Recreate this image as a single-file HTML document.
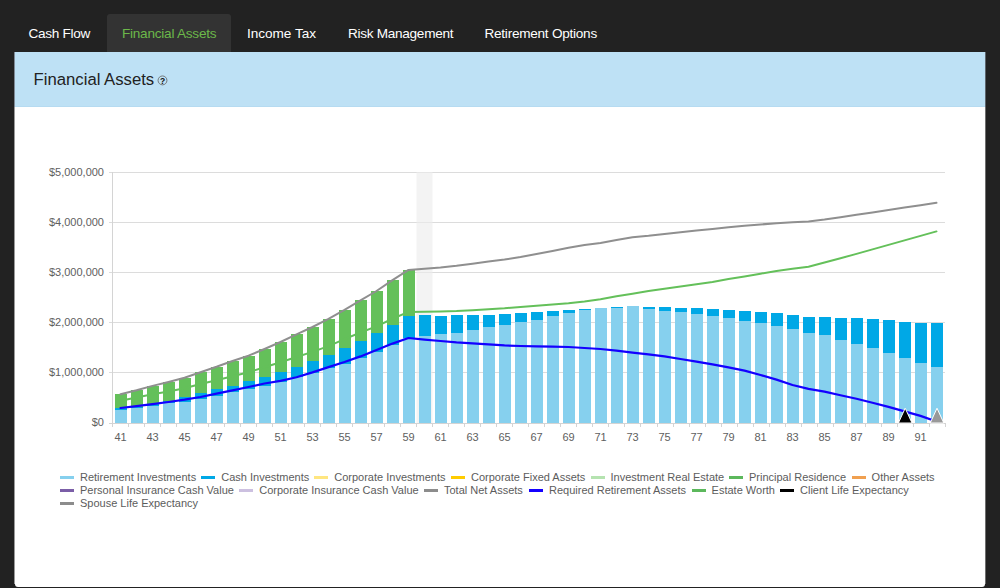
<!DOCTYPE html>
<html><head><meta charset="utf-8">
<style>
html,body{margin:0;padding:0;}
body{width:1000px;height:588px;background:#222222;position:relative;overflow:hidden;font-family:"Liberation Sans",sans-serif;}
.tab{position:absolute;top:14px;height:38px;line-height:40px;font-size:13.6px;color:#ffffff;white-space:nowrap;}
.tab.active{background:#333333;color:#6cb84a;border-radius:3px 3px 0 0;}
#panel{position:absolute;left:15px;top:52px;width:970px;height:535px;background:#fff;border-radius:0 0 3px 3px;overflow:hidden;}
#hdr{position:absolute;left:0;top:0;width:100%;height:54px;background:#bee1f5;border-bottom:1px solid #b6dbf1;}
#title{position:absolute;left:18.6px;top:17.5px;font-size:16.7px;color:#222;white-space:nowrap;}
#chart{position:absolute;left:0;top:0;}
#chart text{font-family:"Liberation Sans",sans-serif;font-size:11px;fill:#606060;}
.leg{position:absolute;font-size:11px;color:#5c5c5c;white-space:nowrap;line-height:13px;}
.leg span.it{display:inline-block;margin-right:5.5px;}
.leg i{display:inline-block;width:14px;height:3px;vertical-align:middle;margin-right:6px;position:relative;top:-1px;}
</style></head><body>
<div class="tab" style="left:28.5px;letter-spacing:-0.31px;">Cash Flow</div>
<div class="tab active" style="left:107px;width:124px;text-align:center;letter-spacing:-0.24px;text-indent:0.24px;">Financial Assets</div>
<div class="tab" style="left:247px;letter-spacing:-0.03px;">Income Tax</div>
<div class="tab" style="left:348px;letter-spacing:-0.29px;">Risk Management</div>
<div class="tab" style="left:484.5px;letter-spacing:-0.26px;">Retirement Options</div>
<div id="panel">
 <div id="hdr"><div id="title">Financial Assets</div></div>
</div>
<svg id="chart" width="1000" height="588" viewBox="0 0 1000 588">
<rect x="14" y="52" width="1" height="55" fill="#7f8a96"/>
<rect x="14" y="107" width="1" height="477" fill="#9a9a9a"/>
<rect x="985" y="52" width="1" height="55" fill="#5d656d"/>
<rect x="985" y="107" width="1" height="477" fill="#6e6e6e"/>
<path d="M109,172.5 H945" stroke="#dcdcdc" stroke-width="1"/>
<path d="M109,222.5 H945" stroke="#dcdcdc" stroke-width="1"/>
<path d="M109,272.5 H945" stroke="#dcdcdc" stroke-width="1"/>
<path d="M109,322.5 H945" stroke="#dcdcdc" stroke-width="1"/>
<path d="M109,372.5 H945" stroke="#dcdcdc" stroke-width="1"/>
<path d="M112.5,172 V427" stroke="#d4d4d4" stroke-width="1"/>
<path d="M109,423.5 H945" stroke="#d4d4d4" stroke-width="1"/>
<path d="M112.5,423 V427" stroke="#d4d4d4" stroke-width="1"/>
<path d="M128.5,423 V427" stroke="#d4d4d4" stroke-width="1"/>
<path d="M144.5,423 V427" stroke="#d4d4d4" stroke-width="1"/>
<path d="M160.5,423 V427" stroke="#d4d4d4" stroke-width="1"/>
<path d="M176.5,423 V427" stroke="#d4d4d4" stroke-width="1"/>
<path d="M192.5,423 V427" stroke="#d4d4d4" stroke-width="1"/>
<path d="M208.5,423 V427" stroke="#d4d4d4" stroke-width="1"/>
<path d="M224.5,423 V427" stroke="#d4d4d4" stroke-width="1"/>
<path d="M240.5,423 V427" stroke="#d4d4d4" stroke-width="1"/>
<path d="M256.5,423 V427" stroke="#d4d4d4" stroke-width="1"/>
<path d="M272.5,423 V427" stroke="#d4d4d4" stroke-width="1"/>
<path d="M288.5,423 V427" stroke="#d4d4d4" stroke-width="1"/>
<path d="M304.5,423 V427" stroke="#d4d4d4" stroke-width="1"/>
<path d="M320.5,423 V427" stroke="#d4d4d4" stroke-width="1"/>
<path d="M336.5,423 V427" stroke="#d4d4d4" stroke-width="1"/>
<path d="M352.5,423 V427" stroke="#d4d4d4" stroke-width="1"/>
<path d="M368.5,423 V427" stroke="#d4d4d4" stroke-width="1"/>
<path d="M384.5,423 V427" stroke="#d4d4d4" stroke-width="1"/>
<path d="M400.5,423 V427" stroke="#d4d4d4" stroke-width="1"/>
<path d="M416.5,423 V427" stroke="#d4d4d4" stroke-width="1"/>
<path d="M432.5,423 V427" stroke="#d4d4d4" stroke-width="1"/>
<path d="M448.5,423 V427" stroke="#d4d4d4" stroke-width="1"/>
<path d="M464.5,423 V427" stroke="#d4d4d4" stroke-width="1"/>
<path d="M480.5,423 V427" stroke="#d4d4d4" stroke-width="1"/>
<path d="M496.5,423 V427" stroke="#d4d4d4" stroke-width="1"/>
<path d="M512.5,423 V427" stroke="#d4d4d4" stroke-width="1"/>
<path d="M528.5,423 V427" stroke="#d4d4d4" stroke-width="1"/>
<path d="M544.5,423 V427" stroke="#d4d4d4" stroke-width="1"/>
<path d="M560.5,423 V427" stroke="#d4d4d4" stroke-width="1"/>
<path d="M576.5,423 V427" stroke="#d4d4d4" stroke-width="1"/>
<path d="M592.5,423 V427" stroke="#d4d4d4" stroke-width="1"/>
<path d="M608.5,423 V427" stroke="#d4d4d4" stroke-width="1"/>
<path d="M624.5,423 V427" stroke="#d4d4d4" stroke-width="1"/>
<path d="M640.5,423 V427" stroke="#d4d4d4" stroke-width="1"/>
<path d="M657.5,423 V427" stroke="#d4d4d4" stroke-width="1"/>
<path d="M673.5,423 V427" stroke="#d4d4d4" stroke-width="1"/>
<path d="M689.5,423 V427" stroke="#d4d4d4" stroke-width="1"/>
<path d="M705.5,423 V427" stroke="#d4d4d4" stroke-width="1"/>
<path d="M721.5,423 V427" stroke="#d4d4d4" stroke-width="1"/>
<path d="M737.5,423 V427" stroke="#d4d4d4" stroke-width="1"/>
<path d="M753.5,423 V427" stroke="#d4d4d4" stroke-width="1"/>
<path d="M769.5,423 V427" stroke="#d4d4d4" stroke-width="1"/>
<path d="M785.5,423 V427" stroke="#d4d4d4" stroke-width="1"/>
<path d="M801.5,423 V427" stroke="#d4d4d4" stroke-width="1"/>
<path d="M817.5,423 V427" stroke="#d4d4d4" stroke-width="1"/>
<path d="M833.5,423 V427" stroke="#d4d4d4" stroke-width="1"/>
<path d="M849.5,423 V427" stroke="#d4d4d4" stroke-width="1"/>
<path d="M865.5,423 V427" stroke="#d4d4d4" stroke-width="1"/>
<path d="M881.5,423 V427" stroke="#d4d4d4" stroke-width="1"/>
<path d="M897.5,423 V427" stroke="#d4d4d4" stroke-width="1"/>
<path d="M913.5,423 V427" stroke="#d4d4d4" stroke-width="1"/>
<path d="M929.5,423 V427" stroke="#d4d4d4" stroke-width="1"/>
<path d="M945.5,423 V427" stroke="#d4d4d4" stroke-width="1"/>
<rect x="416.5" y="172" width="16" height="251" fill="rgb(236,236,236)" fill-opacity="0.63"/>
<rect x="115" y="410" width="12" height="13" fill="#86d0ee"/>
<rect x="115" y="408" width="12" height="2" fill="#00a8e6"/>
<rect x="115" y="394" width="12" height="14" fill="#64c05a"/>
<rect x="131" y="408" width="12" height="15" fill="#86d0ee"/>
<rect x="131" y="407" width="12" height="1" fill="#00a8e6"/>
<rect x="131" y="390" width="12" height="17" fill="#64c05a"/>
<rect x="147" y="406" width="12" height="17" fill="#86d0ee"/>
<rect x="147" y="404" width="12" height="2" fill="#00a8e6"/>
<rect x="147" y="386" width="12" height="18" fill="#64c05a"/>
<rect x="163" y="403" width="12" height="20" fill="#86d0ee"/>
<rect x="163" y="401" width="12" height="2" fill="#00a8e6"/>
<rect x="163" y="382" width="12" height="19" fill="#64c05a"/>
<rect x="179" y="402" width="12" height="21" fill="#86d0ee"/>
<rect x="179" y="397" width="12" height="5" fill="#00a8e6"/>
<rect x="179" y="378" width="12" height="19" fill="#64c05a"/>
<rect x="195" y="399" width="12" height="24" fill="#86d0ee"/>
<rect x="195" y="393" width="12" height="6" fill="#00a8e6"/>
<rect x="195" y="372" width="12" height="21" fill="#64c05a"/>
<rect x="211" y="396" width="12" height="27" fill="#86d0ee"/>
<rect x="211" y="389" width="12" height="7" fill="#00a8e6"/>
<rect x="211" y="367" width="12" height="22" fill="#64c05a"/>
<rect x="227" y="392" width="12" height="31" fill="#86d0ee"/>
<rect x="227" y="386" width="12" height="6" fill="#00a8e6"/>
<rect x="227" y="361" width="12" height="25" fill="#64c05a"/>
<rect x="243" y="389" width="12" height="34" fill="#86d0ee"/>
<rect x="243" y="381" width="12" height="8" fill="#00a8e6"/>
<rect x="243" y="356" width="12" height="25" fill="#64c05a"/>
<rect x="259" y="386" width="12" height="37" fill="#86d0ee"/>
<rect x="259" y="377" width="12" height="9" fill="#00a8e6"/>
<rect x="259" y="349" width="12" height="28" fill="#64c05a"/>
<rect x="275" y="382" width="12" height="41" fill="#86d0ee"/>
<rect x="275" y="372" width="12" height="10" fill="#00a8e6"/>
<rect x="275" y="342" width="12" height="30" fill="#64c05a"/>
<rect x="291" y="377" width="12" height="46" fill="#86d0ee"/>
<rect x="291" y="367" width="12" height="10" fill="#00a8e6"/>
<rect x="291" y="334" width="12" height="33" fill="#64c05a"/>
<rect x="307" y="373" width="12" height="50" fill="#86d0ee"/>
<rect x="307" y="361" width="12" height="12" fill="#00a8e6"/>
<rect x="307" y="327" width="12" height="34" fill="#64c05a"/>
<rect x="323" y="368" width="12" height="55" fill="#86d0ee"/>
<rect x="323" y="355" width="12" height="13" fill="#00a8e6"/>
<rect x="323" y="319" width="12" height="36" fill="#64c05a"/>
<rect x="339" y="364" width="12" height="59" fill="#86d0ee"/>
<rect x="339" y="348" width="12" height="16" fill="#00a8e6"/>
<rect x="339" y="310" width="12" height="38" fill="#64c05a"/>
<rect x="355" y="358" width="12" height="65" fill="#86d0ee"/>
<rect x="355" y="341" width="12" height="17" fill="#00a8e6"/>
<rect x="355" y="300" width="12" height="41" fill="#64c05a"/>
<rect x="371" y="352" width="12" height="71" fill="#86d0ee"/>
<rect x="371" y="333" width="12" height="19" fill="#00a8e6"/>
<rect x="371" y="291" width="12" height="42" fill="#64c05a"/>
<rect x="387" y="345" width="12" height="78" fill="#86d0ee"/>
<rect x="387" y="325" width="12" height="20" fill="#00a8e6"/>
<rect x="387" y="280" width="12" height="45" fill="#64c05a"/>
<rect x="403" y="338" width="12" height="85" fill="#86d0ee"/>
<rect x="403" y="316" width="12" height="22" fill="#00a8e6"/>
<rect x="403" y="270" width="12" height="46" fill="#64c05a"/>
<rect x="419" y="336" width="12" height="87" fill="#86d0ee"/>
<rect x="419" y="315" width="12" height="21" fill="#00a8e6"/>
<rect x="435" y="334" width="12" height="89" fill="#86d0ee"/>
<rect x="435" y="316" width="12" height="18" fill="#00a8e6"/>
<rect x="451" y="333" width="12" height="90" fill="#86d0ee"/>
<rect x="451" y="315" width="12" height="18" fill="#00a8e6"/>
<rect x="467" y="330" width="12" height="93" fill="#86d0ee"/>
<rect x="467" y="315" width="12" height="15" fill="#00a8e6"/>
<rect x="483" y="327" width="12" height="96" fill="#86d0ee"/>
<rect x="483" y="315" width="12" height="12" fill="#00a8e6"/>
<rect x="499" y="325" width="12" height="98" fill="#86d0ee"/>
<rect x="499" y="314" width="12" height="11" fill="#00a8e6"/>
<rect x="515" y="322" width="12" height="101" fill="#86d0ee"/>
<rect x="515" y="313" width="12" height="9" fill="#00a8e6"/>
<rect x="531" y="320" width="12" height="103" fill="#86d0ee"/>
<rect x="531" y="312" width="12" height="8" fill="#00a8e6"/>
<rect x="547" y="316" width="12" height="107" fill="#86d0ee"/>
<rect x="547" y="311" width="12" height="5" fill="#00a8e6"/>
<rect x="563" y="313" width="12" height="110" fill="#86d0ee"/>
<rect x="563" y="310" width="12" height="3" fill="#00a8e6"/>
<rect x="579" y="310" width="12" height="113" fill="#86d0ee"/>
<rect x="579" y="309" width="12" height="1" fill="#00a8e6"/>
<rect x="595" y="308" width="12" height="115" fill="#86d0ee"/>
<rect x="611" y="308" width="12" height="115" fill="#86d0ee"/>
<rect x="611" y="307" width="12" height="1" fill="#00a8e6"/>
<rect x="627" y="306" width="12" height="117" fill="#86d0ee"/>
<rect x="643" y="309" width="12" height="114" fill="#86d0ee"/>
<rect x="643" y="307" width="12" height="2" fill="#00a8e6"/>
<rect x="659" y="311" width="12" height="112" fill="#86d0ee"/>
<rect x="659" y="307" width="12" height="4" fill="#00a8e6"/>
<rect x="675" y="312" width="12" height="111" fill="#86d0ee"/>
<rect x="675" y="308" width="12" height="4" fill="#00a8e6"/>
<rect x="691" y="314" width="12" height="109" fill="#86d0ee"/>
<rect x="691" y="308" width="12" height="6" fill="#00a8e6"/>
<rect x="707" y="316" width="12" height="107" fill="#86d0ee"/>
<rect x="707" y="309" width="12" height="7" fill="#00a8e6"/>
<rect x="723" y="318" width="12" height="105" fill="#86d0ee"/>
<rect x="723" y="310" width="12" height="8" fill="#00a8e6"/>
<rect x="739" y="321" width="12" height="102" fill="#86d0ee"/>
<rect x="739" y="311" width="12" height="10" fill="#00a8e6"/>
<rect x="755" y="323" width="12" height="100" fill="#86d0ee"/>
<rect x="755" y="312" width="12" height="11" fill="#00a8e6"/>
<rect x="771" y="326" width="12" height="97" fill="#86d0ee"/>
<rect x="771" y="313" width="12" height="13" fill="#00a8e6"/>
<rect x="787" y="329" width="12" height="94" fill="#86d0ee"/>
<rect x="787" y="315" width="12" height="14" fill="#00a8e6"/>
<rect x="803" y="333" width="12" height="90" fill="#86d0ee"/>
<rect x="803" y="317" width="12" height="16" fill="#00a8e6"/>
<rect x="819" y="335" width="12" height="88" fill="#86d0ee"/>
<rect x="819" y="317" width="12" height="18" fill="#00a8e6"/>
<rect x="835" y="340" width="12" height="83" fill="#86d0ee"/>
<rect x="835" y="318" width="12" height="22" fill="#00a8e6"/>
<rect x="851" y="344" width="12" height="79" fill="#86d0ee"/>
<rect x="851" y="318" width="12" height="26" fill="#00a8e6"/>
<rect x="867" y="348" width="12" height="75" fill="#86d0ee"/>
<rect x="867" y="319" width="12" height="29" fill="#00a8e6"/>
<rect x="883" y="353" width="12" height="70" fill="#86d0ee"/>
<rect x="883" y="320" width="12" height="33" fill="#00a8e6"/>
<rect x="899" y="358" width="12" height="65" fill="#86d0ee"/>
<rect x="899" y="322" width="12" height="36" fill="#00a8e6"/>
<rect x="915" y="363" width="12" height="60" fill="#86d0ee"/>
<rect x="915" y="323" width="12" height="40" fill="#00a8e6"/>
<rect x="931" y="367" width="12" height="56" fill="#86d0ee"/>
<rect x="931" y="323" width="12" height="44" fill="#00a8e6"/>
<path d="M120.5,394.20 L136.5,390.30 L152.5,385.90 L168.5,382.00 L184.5,377.80 L200.5,372.20 L216.5,366.80 L232.5,361.00 L248.5,355.70 L264.5,349.00 L280.5,342.00 L296.5,334.40 L312.5,327.00 L328.5,318.80 L344.5,309.80 L360.5,300.30 L376.5,291.00 L392.5,280.10 L408.5,269.90 L424.5,268.70 L440.5,267.50 L456.5,265.80 L472.5,263.70 L488.5,261.50 L504.5,259.50 L520.5,257.00 L536.5,254.00 L552.5,251.00 L568.5,247.80 L584.5,245.00 L600.5,243.00 L616.5,240.00 L632.5,237.20 L648.5,235.80 L664.5,234.00 L680.5,232.20 L696.5,230.50 L712.5,229.00 L728.5,227.20 L744.5,225.80 L760.5,224.50 L776.5,223.20 L792.5,222.30 L808.5,221.60 L824.5,219.60 L840.5,217.20 L856.5,214.80 L872.5,212.40 L888.5,210.00 L904.5,207.60 L920.5,205.20 L936.5,202.80" fill="none" stroke="#8f8f8f" stroke-width="2" stroke-linejoin="round" stroke-linecap="round"/>
<path d="M120.5,400.65 L136.5,397.60 L152.5,394.15 L168.5,391.60 L184.5,388.30 L200.5,384.05 L216.5,380.30 L232.5,376.20 L248.5,372.25 L264.5,367.25 L280.5,362.30 L296.5,356.95 L312.5,351.85 L328.5,346.10 L344.5,339.15 L360.5,332.50 L376.5,326.35 L392.5,318.75 L408.5,311.95 L424.5,311.70 L440.5,311.40 L456.5,311.00 L472.5,310.20 L488.5,309.20 L504.5,308.30 L520.5,307.00 L536.5,305.70 L552.5,304.60 L568.5,303.30 L584.5,301.50 L600.5,299.20 L616.5,296.20 L632.5,293.70 L648.5,291.00 L664.5,288.70 L680.5,286.50 L696.5,284.30 L712.5,282.00 L728.5,279.00 L744.5,276.40 L760.5,273.70 L776.5,271.00 L792.5,268.80 L808.5,266.70 L824.5,262.50 L840.5,258.30 L856.5,253.90 L872.5,249.40 L888.5,244.90 L904.5,240.40 L920.5,235.90 L936.5,231.40" fill="none" stroke="#64c05a" stroke-width="2" stroke-linejoin="round" stroke-linecap="round"/>
<path d="M120.5,408.00 L136.5,406.20 L152.5,404.20 L168.5,402.00 L184.5,399.70 L200.5,397.00 L216.5,393.70 L232.5,390.40 L248.5,387.00 L264.5,383.50 L280.5,380.90 L296.5,377.20 L312.5,372.40 L328.5,367.10 L344.5,362.00 L360.5,356.40 L376.5,350.00 L392.5,343.60 L408.5,338.00 L424.5,339.60 L440.5,341.00 L456.5,342.40 L472.5,343.40 L488.5,344.40 L504.5,345.40 L520.5,346.00 L536.5,346.40 L552.5,346.60 L568.5,347.00 L584.5,348.00 L600.5,349.00 L616.5,350.60 L632.5,352.60 L648.5,354.40 L664.5,356.40 L680.5,359.00 L696.5,361.60 L712.5,364.40 L728.5,367.40 L744.5,370.60 L760.5,375.00 L776.5,379.60 L792.5,385.00 L808.5,388.90 L824.5,391.60 L840.5,395.20 L856.5,398.80 L872.5,402.80 L888.5,406.90 L904.5,411.40 L920.5,415.90 L936.5,421.50" fill="none" stroke="#1400ff" stroke-width="2.2" stroke-linejoin="round" stroke-linecap="round"/>
<circle cx="162.5" cy="80.4" r="4.45" fill="none" stroke="#666" stroke-width="0.85"/>
<text x="162.6" y="83.6" text-anchor="middle" style="font-size:8.5px;font-weight:bold;fill:#111">?</text>
<path d="M905.2,408.2 L912.0,423 L898.4000000000001,423 Z" fill="#000" stroke="#fff" stroke-width="1"/>
<path d="M937,408.2 L943.8,423 L930.2,423 Z" fill="#999" stroke="#fff" stroke-width="1"/>
<text x="104" y="175.5" text-anchor="end">$5,000,000</text>
<text x="104" y="225.5" text-anchor="end">$4,000,000</text>
<text x="104" y="275.5" text-anchor="end">$3,000,000</text>
<text x="104" y="325.5" text-anchor="end">$2,000,000</text>
<text x="104" y="375.5" text-anchor="end">$1,000,000</text>
<text x="104" y="425.5" text-anchor="end">$0</text>
<text x="120.5" y="440.7" text-anchor="middle">41</text>
<text x="152.5" y="440.7" text-anchor="middle">43</text>
<text x="184.5" y="440.7" text-anchor="middle">45</text>
<text x="216.5" y="440.7" text-anchor="middle">47</text>
<text x="248.5" y="440.7" text-anchor="middle">49</text>
<text x="280.5" y="440.7" text-anchor="middle">51</text>
<text x="312.5" y="440.7" text-anchor="middle">53</text>
<text x="344.5" y="440.7" text-anchor="middle">55</text>
<text x="376.5" y="440.7" text-anchor="middle">57</text>
<text x="408.5" y="440.7" text-anchor="middle">59</text>
<text x="440.5" y="440.7" text-anchor="middle">61</text>
<text x="472.5" y="440.7" text-anchor="middle">63</text>
<text x="504.5" y="440.7" text-anchor="middle">65</text>
<text x="536.5" y="440.7" text-anchor="middle">67</text>
<text x="568.5" y="440.7" text-anchor="middle">69</text>
<text x="600.5" y="440.7" text-anchor="middle">71</text>
<text x="632.5" y="440.7" text-anchor="middle">73</text>
<text x="664.5" y="440.7" text-anchor="middle">75</text>
<text x="696.5" y="440.7" text-anchor="middle">77</text>
<text x="728.5" y="440.7" text-anchor="middle">79</text>
<text x="760.5" y="440.7" text-anchor="middle">81</text>
<text x="792.5" y="440.7" text-anchor="middle">83</text>
<text x="824.5" y="440.7" text-anchor="middle">85</text>
<text x="856.5" y="440.7" text-anchor="middle">87</text>
<text x="888.5" y="440.7" text-anchor="middle">89</text>
<text x="920.5" y="440.7" text-anchor="middle">91</text>
</svg>
<div class="leg" style="left:60.00px;top:471px"><i style="background:#86d0ee"></i>Retirement Investments</div>
<div class="leg" style="left:201.25px;top:471px"><i style="background:#00a8e6"></i>Cash Investments</div>
<div class="leg" style="left:314.25px;top:471px"><i style="background:#ffe680"></i>Corporate Investments</div>
<div class="leg" style="left:451.00px;top:471px"><i style="background:#ffcc00"></i>Corporate Fixed Assets</div>
<div class="leg" style="left:590.50px;top:471px"><i style="background:#b5e3b0"></i>Investment Real Estate</div>
<div class="leg" style="left:729.00px;top:471px"><i style="background:#5cb85c"></i>Principal Residence</div>
<div class="leg" style="left:851.60px;top:471px"><i style="background:#f0a050"></i>Other Assets</div>
<div class="leg" style="left:60.00px;top:484px"><i style="background:#7b5ea7"></i>Personal Insurance Cash Value</div>
<div class="leg" style="left:239.25px;top:484px"><i style="background:#ccc0e0"></i>Corporate Insurance Cash Value</div>
<div class="leg" style="left:424.00px;top:484px"><i style="background:#8c8c8c"></i>Total Net Assets</div>
<div class="leg" style="left:529.00px;top:484px"><i style="background:#1400ff"></i>Required Retirement Assets</div>
<div class="leg" style="left:691.60px;top:484px"><i style="background:#5cb85c"></i>Estate Worth</div>
<div class="leg" style="left:780.00px;top:484px"><i style="background:#000000"></i>Client Life Expectancy</div>
<div class="leg" style="left:60.00px;top:497px"><i style="background:#8c8c8c"></i>Spouse Life Expectancy</div>
</body></html>
